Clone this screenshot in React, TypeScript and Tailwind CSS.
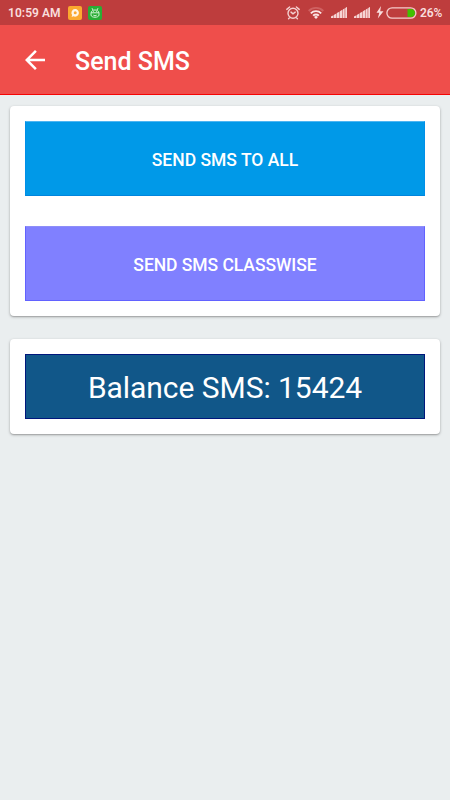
import React from "react";

function AlarmIcon() {
  return (
    <svg className="h-[14px] w-[14px]" viewBox="0 0 14 14" fill="none" stroke="#f4d0d0" strokeWidth="1.4" strokeLinecap="round">
      <circle cx="7" cy="7.2" r="5" />
      <path d="M0.8 3.4 3.6 1M13.2 3.4 10.4 1M5 6.1l2 1.7 2.2-1.7M3.4 11.9l-.8.9M10.6 11.9l.8.9" />
    </svg>
  );
}

function WifiIcon() {
  return (
    <svg className="h-[12px] w-[16px]" viewBox="0 0 16 12" fill="none" strokeWidth="1.8">
      <path d="M0.7 4a10.3 10.3 0 0 1 14.6 0" stroke="#cf6161" />
      <path d="M2.8 6.4a7.3 7.3 0 0 1 10.4 0M5.1 8.7a4.1 4.1 0 0 1 5.8 0" stroke="#fbe6e6" />
      <path d="M8 12 6 9.9a2.8 2.8 0 0 1 4 0Z" fill="#fbe6e6" />
    </svg>
  );
}

function SignalIcon() {
  return (
    <svg className="h-[11px] w-[16px]" viewBox="0 0 16 11">
      <path d="M0 9.8 16 0V11H0Z" fill="#d98484" />
      <path d="M0 9.6 2.1 8.4V11H0ZM3 7.9 5.1 6.7V11H3ZM6 6.1 8.1 4.9V11H6ZM9 4.2 11.1 3V11H9ZM12 2.4 13.4 1.6V11H12ZM14.4 1 16 0V11H14.4Z" fill="#f6d4d4" />
    </svg>
  );
}

function StatusBar() {
  return (
    <div className="flex h-[25px] items-center bg-[#be3d3d] pl-[8px] pr-[8px] text-[12px] font-semibold text-[#f9dddd]">
      <span className="w-[60px] whitespace-nowrap tracking-[0.05px]">10:59 AM</span>
      <svg className="h-[14px] w-[14px]" viewBox="0 0 14 14">
        <rect width="14" height="14" rx="2" fill="#fba92f" />
        <path d="M7 3.1a3.8 3.8 0 1 1-1.6 7.2L3.6 11l.5-1.9A3.8 3.8 0 0 1 7 3.1Z" fill="#fff5e6" />
        <circle cx="7.2" cy="6.8" r="1.5" fill="#fba92f" />
      </svg>
      <svg className="ml-[6px] h-[14px] w-[14px]" viewBox="0 0 14 14">
        <rect width="14" height="14" rx="2" fill="#29ad35" />
        <g fill="none" stroke="#d5f4d7" strokeWidth="1">
          <path d="M4 2.2 5 4M10 2.2 9 4M3 7.2C3 2.9 11 2.9 11 7.2V9c0 3-8 3-8 0ZM3 6.8h8M5.3 9.1c.5.8 2.9.8 3.4 0" />
          <path d="M5 5.4h.8M8.2 5.4H9" />
        </g>
      </svg>
      <div className="ml-auto flex items-center">
        <AlarmIcon />
        <span className="ml-[8px] flex"><WifiIcon /></span>
        <span className="ml-[7px] flex"><SignalIcon /></span>
        <span className="ml-[7px] flex"><SignalIcon /></span>
        <svg className="ml-[6px] h-[13px] w-[8px]" viewBox="0 0 8 13" fill="#f9dddd">
          <path d="M5 0 .5 6.8h2.8L1.8 12.5 7.5 5.2H4.2Z" />
        </svg>
        <svg className="ml-[2px] h-[12px] w-[31px]" viewBox="0 0 31 12">
          <path d="M21.5 2h3.5a4 4 0 0 1 0 8H21.5Z" fill="#40c000" />
          <rect x=".9" y=".8" width="29" height="10.4" rx="5.2" fill="none" stroke="#f6cccc" strokeWidth="1.3" />
        </svg>
        <span className="ml-[3px] w-[22px] whitespace-nowrap tracking-[-0.15px]">26%</span>
      </div>
    </div>
  );
}

function Card({ className, children }: { className: string; children: React.ReactNode }) {
  return (
    <section className={`mx-[10px] rounded-[4px] bg-white px-[15px] shadow-[0_1px_3px_rgba(0,0,0,0.28),0_1px_1px_rgba(0,0,0,0.12)] ${className}`}>
      {children}
    </section>
  );
}

export default function App() {
  return (
    <div className="h-[800px] w-[450px] overflow-hidden bg-[#eaeeef] font-['Roboto',sans-serif]">
      <StatusBar />
      <header className="flex h-[70px] items-center border-b border-[#f50505] bg-[#ef4e4b] pl-[25px] text-white">
        <svg className="h-[20px] w-[20px]" viewBox="0 0 20 20" fill="white">
          <path d="M20 8.75H4.8l7-7L10 0 0 10l10 10 1.75-1.75-6.95-7H20Z" />
        </svg>
        <h1 className="ml-[30px] pt-[4px] text-[25px] leading-[30px] font-medium">Send SMS</h1>
      </header>
      <main className="pt-[11px]">
        <Card className="flex h-[210px] flex-col gap-[30px] pt-[15px]">
          <button className="h-[75px] border border-t-[#4db5f2] border-r-[#008fe8] border-b-[#0085dd] border-l-[#008fe8] bg-[#0099e8] pt-[4px] text-[17.5px] font-medium text-white">SEND SMS TO ALL</button>
          <button className="h-[75px] border border-t-[#8e8ef8] border-r-[#6262ff] border-b-[#6262ff] border-l-[#6262ff] bg-[#8080ff] pt-[4px] text-[17.5px] font-medium tracking-[-0.05px] text-white">SEND SMS CLASSWISE</button>
        </Card>
        <Card className="mt-[23px] h-[95px] pt-[15px]">
          <div className="flex h-[65px] items-center justify-center border border-[#00177c] bg-[#115789] pt-px text-[30px] tracking-[-0.05px] text-white">Balance SMS: 15424</div>
        </Card>
      </main>
    </div>
  );
}
